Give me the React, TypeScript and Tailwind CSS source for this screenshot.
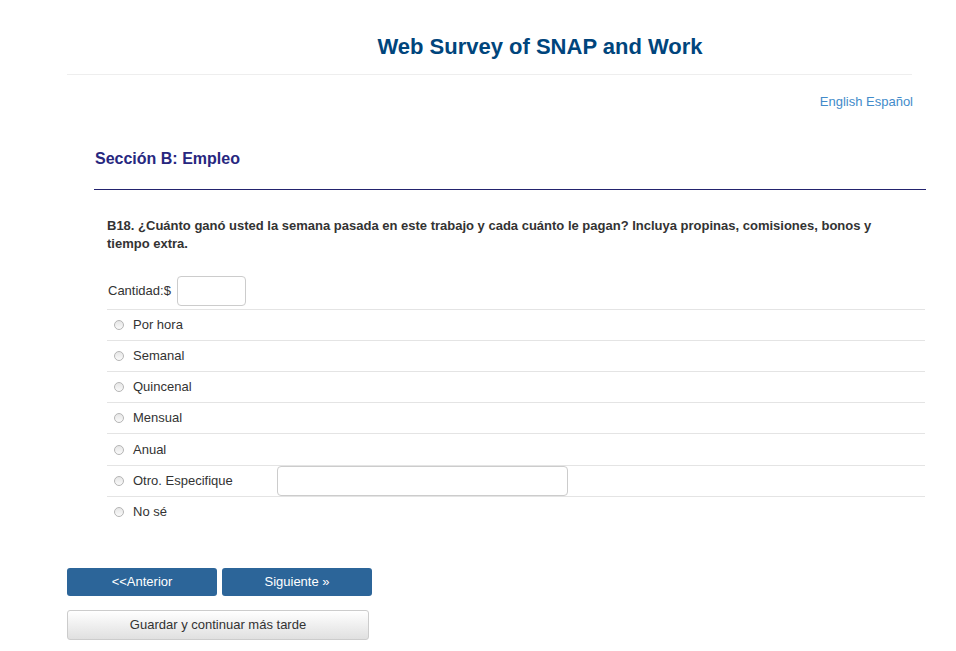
import React from "react";

const options = ["Por hora", "Semanal", "Quincenal", "Mensual", "Anual", "Otro. Especifique", "No sé"];

function Radio() {
  return (
    <span className="inline-block h-[10px] w-[10px] shrink-0 rounded-full border border-[#b5b5b5] bg-gradient-to-b from-[#e6e6e6] to-[#fafafa]" />
  );
}

export default function App() {
  return (
    <div className="min-h-[651px] bg-white font-['Liberation_Sans',Arial,sans-serif] text-[13px] text-[#333]">
      <div className="ml-[67px] w-[846px]">
        <h1 className="pl-[100px] pt-[35px] text-center text-[22px] font-bold leading-[24px] text-[#00457c]">
          Web Survey of SNAP and Work
        </h1>
        <div className="mt-[15px] w-[845px] border-t border-[#eeeeee]" />
        <div className="mt-[18px] text-right leading-[18px] text-[#428bca]">
          <a href="#">English</a> <a href="#">Español</a>
        </div>
      </div>

      <div className="ml-[94px] w-[832px]">
        <h2 className="ml-[1px] mt-[38px] text-[16px] font-bold leading-[20px] text-[#27277f]">Sección B: Empleo</h2>
        <div className="mt-[20px] border-t border-[#23236e]" />
      </div>

      <div className="ml-[107px] w-[818px]">
        <p className="mt-[27px] w-[790px] font-bold leading-[18px]">
          B18. ¿Cuánto ganó usted la semana pasada en este trabajo y cada cuánto le pagan? Incluya propinas, comisiones, bonos y tiempo extra.
        </p>

        <div className="mt-[23px] flex items-center gap-[6px] pl-[1px]">
          <span>Cantidad:$</span>
          <input className="h-[30px] w-[69px] rounded-[4px] border border-[#cccccc] px-2 outline-none" />
        </div>

        <div className="mt-[3px]">
          {options.map((o, i) => (
            <div
              key={o}
              className={`flex items-center border-t border-[#e4e4e4] pl-[7px] ${i === 4 ? "h-[32px]" : "h-[31px]"}`}
            >
              <Radio />
              <span className="ml-[9px] w-[144px]">{o}</span>
              {i === 5 && (
                <input className="h-[30px] w-[291px] rounded-[4px] border border-[#cccccc] px-2 outline-none" />
              )}
            </div>
          ))}
        </div>
      </div>

      <div className="ml-[67px] mt-[41px]">
        <div className="flex gap-[5px]">
          <button className="h-[28px] w-[150px] rounded-[3px] bg-[#2c6599] text-[13px] text-white">{"<<Anterior"}</button>
          <button className="h-[28px] w-[150px] rounded-[3px] bg-[#2c6599] text-[13px] text-white">Siguiente »</button>
        </div>
        <button className="mt-[14px] h-[30px] w-[302px] rounded-[3px] border border-[#cccccc] bg-gradient-to-b from-white to-[#e0e0e0] text-[13px] text-[#333]">
          Guardar y continuar más tarde
        </button>
      </div>
    </div>
  );
}
